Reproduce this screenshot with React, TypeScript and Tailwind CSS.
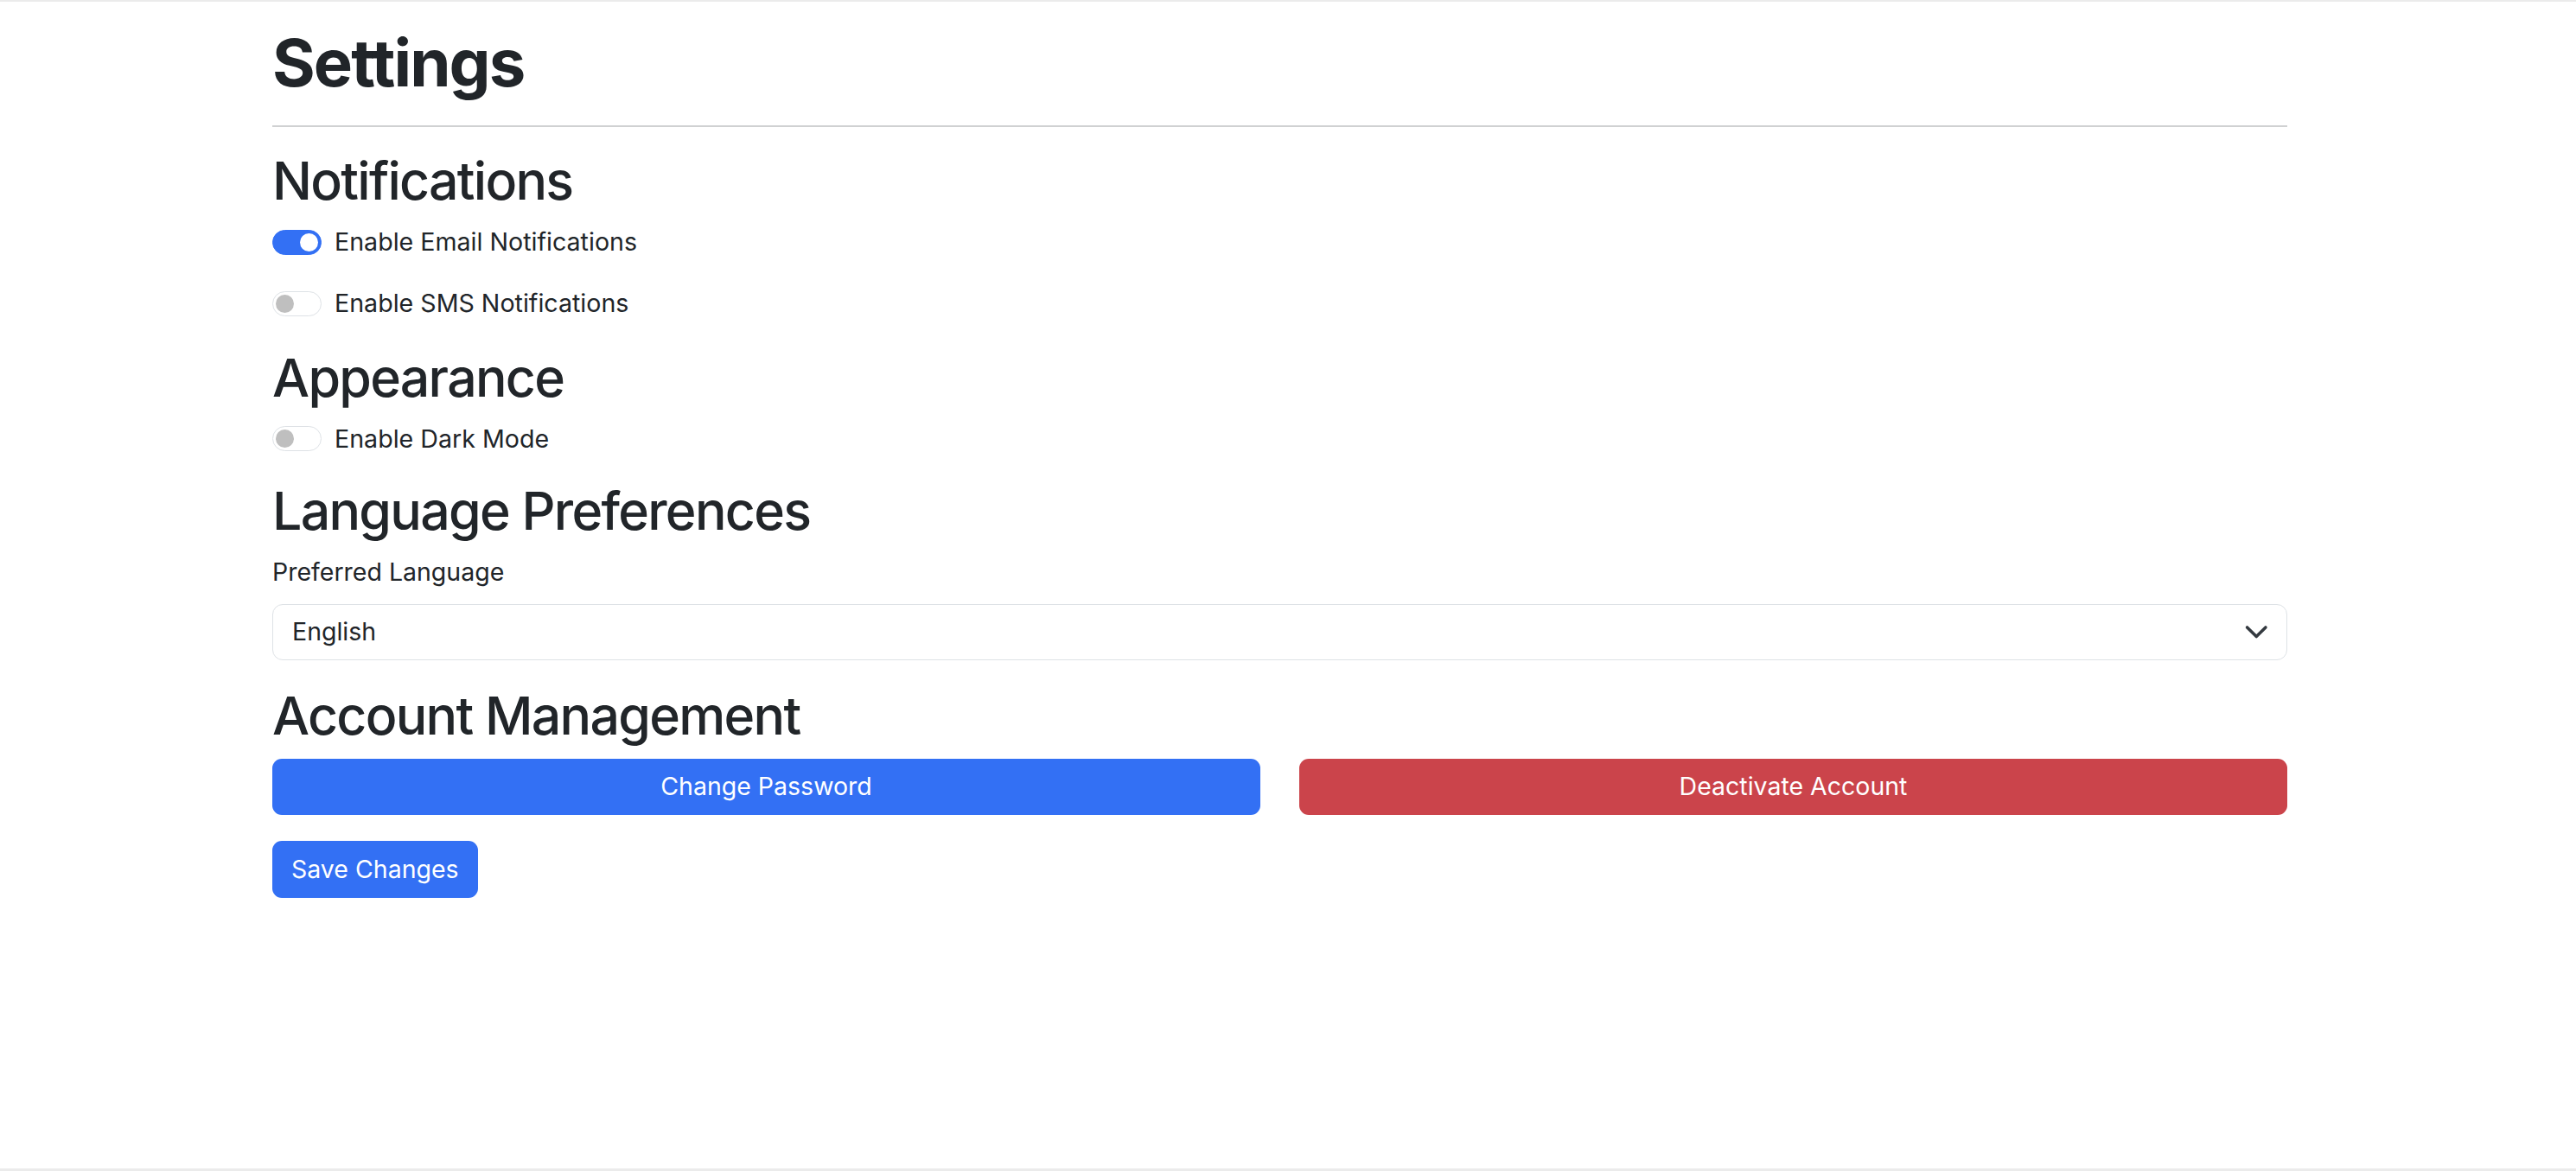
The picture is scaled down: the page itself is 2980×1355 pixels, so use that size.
import React from "react";

function Toggle({ on, label }: { on: boolean; label: string }) {
  return (
    <div className="flex items-center h-[42.75px]">
      <div
        className={
          on
            ? "relative w-[57px] h-[29px] rounded-full bg-[#3370f4] border border-[#3370f4]"
            : "relative w-[57px] h-[29px] rounded-full bg-white border border-[#dee2e6]"
        }
      >
        <div
          className={
            on
              ? "absolute top-[3px] right-[3px] w-[21px] h-[21px] rounded-full bg-white"
              : "absolute top-[3px] left-[3px] w-[21px] h-[21px] rounded-full bg-[#bfbfbf]"
          }
        />
      </div>
      <span className="ml-[15px] text-[28.6px] leading-[1.5] text-[#212529]">{label}</span>
    </div>
  );
}

function H2({ children }: { children: React.ReactNode }) {
  return (
    <h2 className="text-[60.8px] leading-[1.2] font-medium tracking-[-0.028em] text-[#212529] mb-[13px]">
      {children}
    </h2>
  );
}

export default function App() {
  return (
    <div
      className="min-h-[1355px] bg-white border-t-2 border-b-[3px] border-[#ebebeb]"
      style={{ fontFamily: "Inter, 'Noto Sans', sans-serif" }}
    >
      <div className="ml-[315px] w-[2331px] pt-[25px] text-[#212529]">
        <h1 className="text-[76px] leading-[1.2] font-bold tracking-[-0.025em]">Settings</h1>
        <div className="mt-[27px] mb-[26px] h-[2px] bg-[#d0d1d2]" />

        <H2>Notifications</H2>
        <div className="mb-[28px]">
          <Toggle on={true} label="Enable Email Notifications" />
        </div>
        <div className="mb-[28px]">
          <Toggle on={false} label="Enable SMS Notifications" />
        </div>

        <H2>Appearance</H2>
        <div className="mb-[26px]">
          <Toggle on={false} label="Enable Dark Mode" />
        </div>

        <H2>Language Preferences</H2>
        <div className="text-[28.5px] leading-[1.5] mb-[15px]">Preferred Language</div>
        <div className="relative h-[65px] rounded-[12px] border border-[#dee2e6] bg-white flex items-center pl-[22px] mb-[28px]">
          <span className="text-[28.5px] leading-[1.5]">English</span>
          <svg
            className="absolute right-[21px] top-[17px] w-[28.5px] h-[28.5px]"
            viewBox="0 0 16 16"
            fill="none"
            stroke="#343a40"
            strokeWidth="2"
            strokeLinecap="round"
            strokeLinejoin="round"
          >
            <path d="M2 5l6 6 6-6" />
          </svg>
        </div>

        <H2>Account Management</H2>
        <div className="grid grid-cols-2 gap-[45px] mb-[30px]">
          <button className="h-[65px] rounded-[11px] bg-[#3370f4] text-white text-[28.5px] leading-[1.5]">
            Change Password
          </button>
          <button className="h-[65px] rounded-[11px] bg-[#cb444b] text-white text-[28.5px] leading-[1.5]">
            Deactivate Account
          </button>
        </div>
        <button className="h-[66px] px-[22px] rounded-[11px] bg-[#3370f4] text-white text-[28.5px] leading-[1.5]">
          Save Changes
        </button>
      </div>
    </div>
  );
}
